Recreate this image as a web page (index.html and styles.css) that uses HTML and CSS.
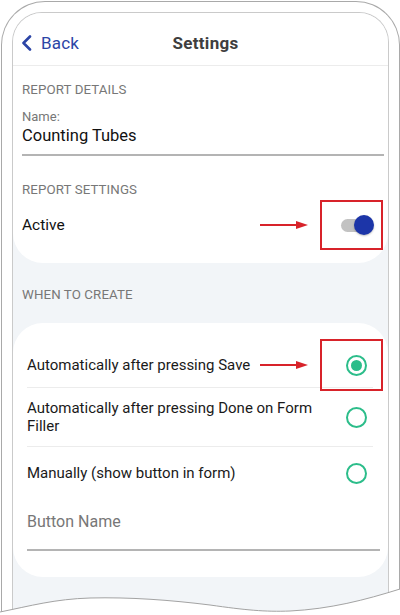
FILE: index.html
```html
<!DOCTYPE html>
<html lang="en">
<head>
<meta charset="utf-8">
<title>Settings</title>
<link rel="stylesheet" href="styles.css">
</head>
<body>
<div class="phone">
  <div class="frame">
    <div class="screen">
      <header class="nav">
        <div class="back">
          <svg class="chevron" width="11" height="16" viewBox="0 0 11 16"><path d="M9 1.5 L2.5 8 L9 14.5" fill="none" stroke="#2c45a6" stroke-width="2.6" stroke-linecap="round" stroke-linejoin="round"/></svg>
          <span>Back</span>
        </div>
        <div class="title">Settings</div>
        <div class="nav-spacer"></div>
      </header>

      <section class="card card-top">
        <div class="section-label">REPORT DETAILS</div>
        <div class="field">
          <div class="field-label">Name:</div>
          <div class="field-value">Counting Tubes</div>
        </div>
        <div class="section-label section-gap">REPORT SETTINGS</div>
        <div class="toggle-row">
          <span class="row-text">Active</span>
          <svg class="arrow" width="48" height="10" viewBox="0 0 48 10"><path d="M0 5 H38" stroke="#d8232a" stroke-width="2"/><path d="M36 1 L48 5 L36 9 Z" fill="#d8232a"/></svg>
          <div class="callout callout-toggle">
            <span class="switch"><span class="knob"></span></span>
          </div>
        </div>
      </section>

      <div class="group-label">WHEN TO CREATE</div>

      <section class="card card-options">
        <div class="option option-first">
          <span class="option-text option-text-single">Automatically after pressing Save</span>
          <svg class="arrow" width="48" height="10" viewBox="0 0 48 10"><path d="M0 5 H38" stroke="#d8232a" stroke-width="2"/><path d="M36 1 L48 5 L36 9 Z" fill="#d8232a"/></svg>
          <div class="callout callout-radio">
            <span class="radio checked"></span>
          </div>
        </div>
        <div class="option option-second">
          <span class="option-text">Automatically after pressing Done on Form Filler</span>
          <span class="radio"></span>
        </div>
        <div class="option option-third">
          <span class="option-text">Manually (show button in form)</span>
          <span class="radio"></span>
        </div>
        <div class="input-field">Button Name</div>
      </section>
    </div>
  </div>
  <svg class="torn" width="400" height="40" viewBox="0 0 400 40">
    <path d="M0 37 C 30 31, 55 24, 90 23 C 130 22, 170 25, 210 30 C 245 35, 265 37, 290 36 C 330 34, 365 25, 400 14 L400 40 L0 40 Z" fill="#ffffff"/>
    <path d="M0 37 C 30 31, 55 24, 90 23 C 130 22, 170 25, 210 30 C 245 35, 265 37, 290 36 C 330 34, 365 25, 400 14" fill="none" stroke="#a3a3a3" stroke-width="1"/>
  </svg>
</div>
</body>
</html>
```

FILE: styles.css
```css
* { box-sizing: border-box; }
html, body {
  margin: 0;
  padding: 0;
  background: #ffffff;
}
body {
  width: 400px;
  height: 615px;
  overflow: hidden;
  font-family: Roboto, "Noto Sans", "Liberation Sans", sans-serif;
  color: #1a1a1a;
}
.phone {
  position: relative;
  width: 400px;
  height: 615px;
  overflow: hidden;
  background: #ffffff;
}
.frame {
  margin: 1px 0 0 1px;
  width: 399px;
  height: 640px;
  border: 1px solid #a9a9a9;
  border-bottom: none;
  border-radius: 44px 44px 0 0;
  padding: 10px 10px 0 10px;
}
.screen {
  height: 100%;
  border: 1px solid #cacaca;
  border-bottom: none;
  border-radius: 30px 30px 0 0;
  background: #f2f5f8;
  overflow: hidden;
}
.nav {
  height: 53px;
  background: #ffffff;
  border-bottom: 1px solid #ececec;
  display: grid;
  grid-template-columns: 1fr auto 1fr;
  align-items: center;
  padding: 7px 0 0 8px;
}
.back {
  display: flex;
  align-items: center;
  gap: 9px;
  color: #2c45a6;
  font-size: 17px;
  letter-spacing: 0.2px;
}
.chevron { display: block; }
.title {
  font-size: 17px;
  font-weight: 700;
  color: #3e3e3e;
  letter-spacing: 0.3px;
  padding-left: 2px;
}
.card {
  background: #ffffff;
}
.card-top {
  border-radius: 0 0 30px 30px;
  padding: 16px 4px 13px 9px;
}
.section-label, .group-label {
  font-size: 13.3px;
  line-height: 16px;
  color: #777777;
  letter-spacing: 0.1px;
}
.section-gap { margin-top: 26px; }
.field {
  margin-top: 11px;
  padding-bottom: 8px;
  border-bottom: 2px solid #b4b4b4;
}
.field-label {
  font-size: 13px;
  line-height: 16px;
  color: #777777;
}
.field-value {
  margin-top: 1px;
  font-size: 16.5px;
  line-height: 20px;
  color: #111111;
}
.toggle-row {
  margin-top: 2px;
  height: 50px;
  display: flex;
  align-items: center;
}
.row-text {
  flex: 1;
  font-size: 15.5px;
  color: #111111;
}
.arrow {
  display: block;
  flex: none;
  margin-right: 12px;
}
.callout {
  flex: none;
  width: 63px;
  border: 2px solid #d8232a;
  display: flex;
  align-items: center;
  justify-content: flex-end;
}
.callout-toggle {
  height: 50px;
  margin-right: 1px;
  padding-right: 7px;
}
.switch {
  position: relative;
  display: block;
  width: 33px;
  height: 20px;
}
.switch::before {
  content: "";
  position: absolute;
  left: 0;
  top: 4px;
  width: 28px;
  height: 13px;
  border-radius: 7px;
  background: #c2c2c2;
}
.knob {
  position: absolute;
  right: 0;
  top: 0;
  width: 20px;
  height: 20px;
  border-radius: 50%;
  background: #1c35a8;
  box-shadow: 0 1px 2px rgba(0, 0, 0, 0.25);
}
.group-label {
  padding: 24px 0 20px 9px;
}
.card-options {
  border-radius: 30px;
  padding: 20px 15px 26px 14px;
}
.option {
  display: flex;
  align-items: center;
  border-bottom: 1px solid #ececec;
}
.option-first { height: 45px; }
.option-second { height: 59px; }
.option-third { height: 52px; border-bottom: none; }
.option-text {
  flex: 1;
  font-size: 15px;
  line-height: 18px;
  color: #1a1a1a;
  padding-right: 16px;
}
.option-text-single {
  white-space: nowrap;
  padding-right: 4px;
}
.callout-radio {
  height: 52px;
  margin-right: -10px;
  padding-right: 14px;
}
.radio {
  flex: none;
  width: 21px;
  height: 21px;
  border-radius: 50%;
  border: 2px solid #2cbd8a;
  display: flex;
  align-items: center;
  justify-content: center;
  margin-right: 6px;
}
.callout .radio { margin-right: 0; }
.radio.checked::after {
  content: "";
  width: 11px;
  height: 11px;
  border-radius: 50%;
  background: #2cbd8a;
}
.input-field {
  margin-right: -7px;
  padding: 13px 0 17px;
  font-size: 16px;
  line-height: 20px;
  color: #777777;
  border-bottom: 2px solid #b4b4b4;
}
.torn {
  position: absolute;
  left: 0;
  bottom: 0;
  display: block;
}
```
